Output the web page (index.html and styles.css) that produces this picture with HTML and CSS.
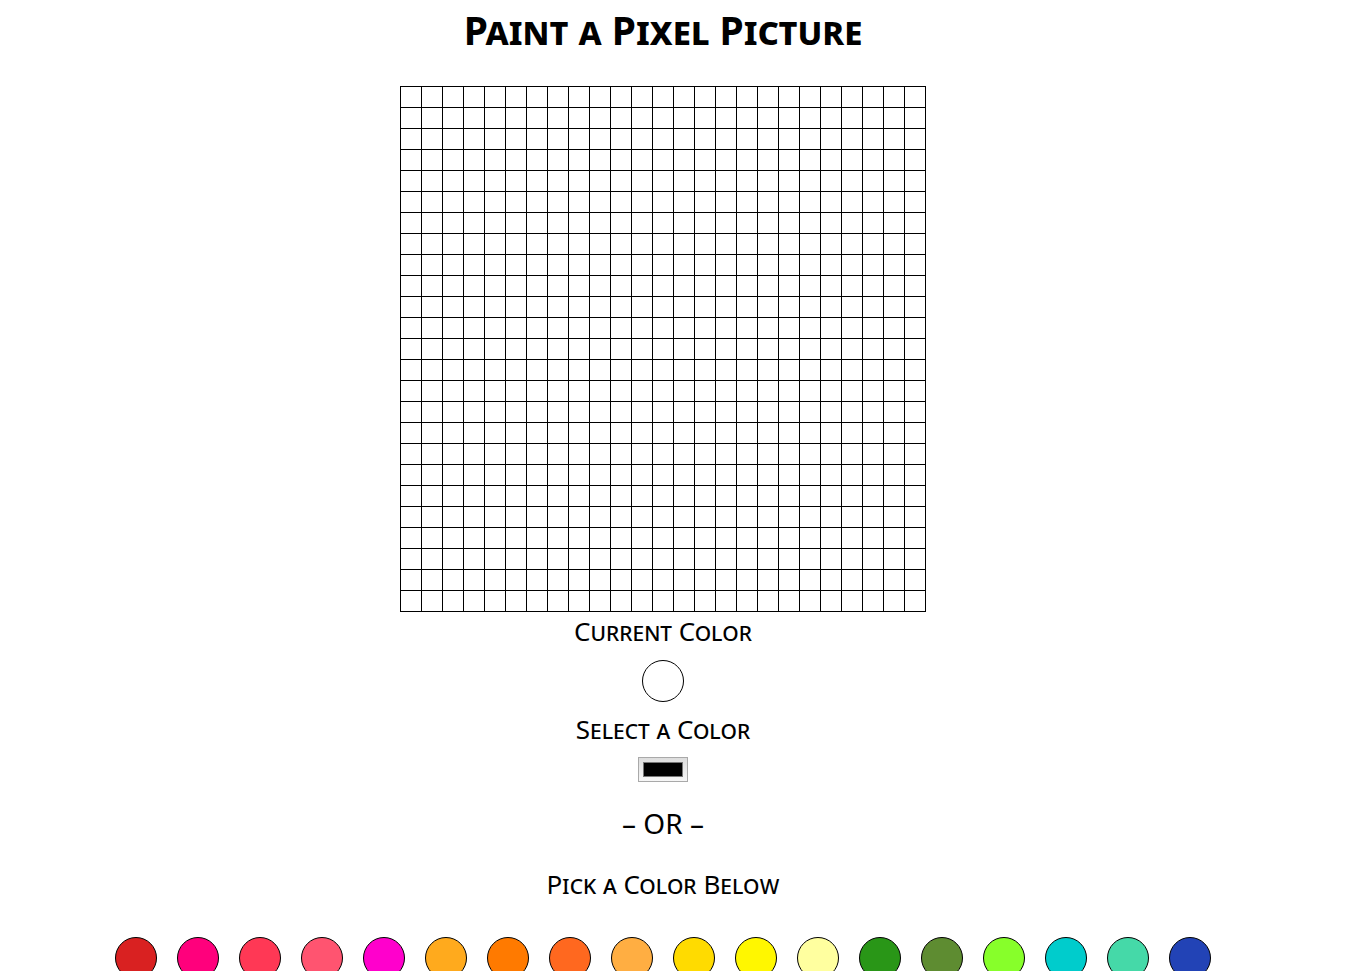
FILE: index.html
```html
<!DOCTYPE html>
<html lang="en">
<head>
<meta charset="utf-8">
<title>Paint a Pixel Picture</title>
<link rel="stylesheet" href="styles.css">
</head>
<body>
<main class="page">
  <h1 class="title">Paint a Pixel Picture</h1>
  <table class="canvas" aria-label="Pixel canvas"><tbody id="canvas"></tbody></table>
  <h2 class="label">Current Color</h2>
  <div class="current" id="current"></div>
  <label class="label" for="picker">Select a Color</label>
  <input class="picker" type="color" id="picker" value="#000000">
  <p class="or">– OR –</p>
  <h2 class="label">Pick a Color Below</h2>
  <div class="palette" id="palette"></div>
</main>
<script src="script.js"></script>
</body>
</html>
```
FILE: styles.css
```css
* {
  box-sizing: border-box;
}

body {
  margin: 0;
  height: 100vh;
  overflow: hidden;
  background: #fff;
  color: #000;
  font-family: "Walter Turncoat", "Noto Sans", sans-serif;
}

.page {
  display: flex;
  flex-direction: column;
  align-items: center;
  padding-right: 34px;
}

.title {
  margin: 0 0 26px;
  font-size: 39px;
  line-height: 60px;
  font-weight: 700;
  font-variant: small-caps;
}

.canvas {
  border-collapse: collapse;
  margin-bottom: 3px;
}

.cell {
  width: 21px;
  height: 21px;
  padding: 0;
  border: 1px solid #000;
}

.label {
  margin: 0;
  font-size: 26px;
  line-height: 32px;
  font-weight: 400;
  font-variant: small-caps;
}

.current {
  width: 42px;
  height: 42px;
  margin: 13px 0 11px;
  border: 1px solid #000;
  border-radius: 50%;
  background: #fff;
}

.picker {
  appearance: none;
  width: 50px;
  height: 25px;
  margin: 12px 0 25px;
  padding: 0;
  border: 1px solid #a9a9a9;
  background: linear-gradient(#dddddd, #f6f6f6);
}

.picker::-webkit-color-swatch-wrapper {
  padding: 4px;
}

.picker::-webkit-color-swatch {
  border: 1px solid #777;
  border-radius: 0;
}

.or {
  margin: 0 0 29px;
  font-size: 28px;
  line-height: 32px;
}

.palette {
  display: flex;
  flex-wrap: wrap;
  justify-content: center;
  gap: 20px;
  margin-top: 37px;
}

.swatch {
  width: 42px;
  height: 42px;
  padding: 0;
  border: 1px solid #000;
  border-radius: 50%;
}
```
FILE: script.js
```js
const SIZE = 25;
const COLORS = [
  "#d92121", "#ff007c", "#ff3855", "#ff5470", "#ff00cc", "#ffaa1d",
  "#ff7a00", "#ff681f", "#ffae42", "#ffdb00", "#fff700", "#ffff9f",
  "#299617", "#5e8c31", "#87ff2a", "#00cccc", "#45d9a8", "#2243b6"
];

const canvas = document.getElementById("canvas");
const current = document.getElementById("current");
const picker = document.getElementById("picker");
const palette = document.getElementById("palette");
let color = "#ffffff";

function choose(value) {
  color = value;
  current.style.background = value;
}

for (let y = 0; y < SIZE; y++) {
  const row = canvas.insertRow();
  for (let x = 0; x < SIZE; x++) {
    row.insertCell().className = "cell";
  }
}

canvas.addEventListener("click", (event) => {
  if (event.target.matches(".cell")) event.target.style.background = color;
});

picker.addEventListener("input", () => choose(picker.value));

for (const value of COLORS) {
  const swatch = document.createElement("button");
  swatch.type = "button";
  swatch.className = "swatch";
  swatch.style.background = value;
  swatch.setAttribute("aria-label", value);
  swatch.addEventListener("click", () => choose(value));
  palette.append(swatch);
}
```
